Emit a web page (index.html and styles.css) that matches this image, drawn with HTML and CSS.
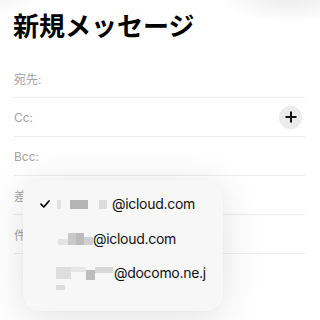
FILE: index.html
```html
<!DOCTYPE html>
<html lang="ja">
<head>
<meta charset="utf-8">
<link rel="stylesheet" href="styles.css">
</head>
<body>
<div class="page">
  <header class="header">
    <h1 class="title">新規メッセージ</h1>
  </header>
  <div class="fields">
    <div class="row"><span class="label">宛先:</span></div>
    <div class="row">
      <span class="label">Cc:</span>
      <span class="add">
        <svg width="12" height="12" viewBox="0 0 12 12"><path d="M6 0.5v11M0.5 6h11" stroke="#111" stroke-width="2" fill="none"/></svg>
      </span>
    </div>
    <div class="row"><span class="label">Bcc:</span></div>
    <div class="row"><span class="label">差</span></div>
    <div class="row"><span class="label">件</span></div>
  </div>

  <div class="menu">
    <div class="item">
      <span class="check">
        <svg width="10" height="8" viewBox="0 0 10 8"><path d="M1 4.2l2.8 2.8L9 1" stroke="#000" stroke-width="1.7" fill="none" stroke-linecap="round" stroke-linejoin="round"/></svg>
      </span>
      <span class="mask m1">
        <i class="b b1a"></i><i class="b b1b"></i><i class="b b1c"></i>
      </span>
      <span class="addr">@icloud.com</span>
    </div>
    <div class="item">
      <span class="check"></span>
      <span class="mask m2">
        <i class="b b2a"></i><i class="b b2b"></i><i class="b b2c"></i><i class="b b2d"></i>
      </span>
      <span class="addr">@icloud.com</span>
    </div>
    <div class="item">
      <span class="check"></span>
      <span class="mask m3">
        <i class="b b3a"></i><i class="b b3b"></i><i class="b b3c"></i><i class="b b3d"></i>
      </span>
      <span class="addr">@docomo.ne.j</span>
    </div>
    <div class="item-tail">
      <span class="check"></span>
      <i class="b b4"></i>
    </div>
  </div>
</div>
</body>
</html>
```

FILE: styles.css
```css
* { box-sizing: border-box; }
html, body {
  margin: 0;
  padding: 0;
  width: 320px;
  height: 320px;
  overflow: hidden;
  background: #fff;
}
body {
  font-family: "Inter", "Noto Sans CJK JP", sans-serif;
  color: #000;
}
.page {
  position: relative;
  width: 320px;
  height: 320px;
  background:
    radial-gradient(ellipse 70px 22px at 290px 0px, rgba(0,0,0,0.07), rgba(0,0,0,0)),
    radial-gradient(ellipse 40px 14px at 0px 0px, rgba(0,0,0,0.04), rgba(0,0,0,0)),
    #fff;
}
.header {
  height: 59px;
  padding: 9px 0 0 13px;
}
.title {
  margin: 0;
  font-family: "Noto Sans CJK JP", sans-serif;
  font-weight: 700;
  font-size: 26px;
  line-height: 32px;
  letter-spacing: 0;
  color: #000;
}
.fields {
  padding: 0 15px 0 14px;
}
.row {
  height: 39px;
  border-bottom: 1px solid #ececec;
  display: flex;
  align-items: center;
  justify-content: space-between;
}
.label {
  font-family: "Inter", "Noto Sans CJK JP", sans-serif;
  font-size: 12px;
  color: #a3a3a3;
}
.add {
  width: 23px;
  height: 23px;
  border-radius: 50%;
  background: #ebebeb;
  display: flex;
  align-items: center;
  justify-content: center;
  margin-right: 3px;
}
.add svg { display: block; }

.menu {
  position: absolute;
  left: 23px;
  top: 180px;
  width: 200px;
  height: 131px;
  border-radius: 16px;
  background: #f7f7f7;
  box-shadow: 0 6px 40px rgba(0,0,0,0.12), 0 0 2px rgba(0,0,0,0.03);
  padding-top: 7px;
}
.item {
  height: 34.5px;
  display: flex;
  align-items: center;
  padding-left: 17px;
}
.item-tail {
  display: flex;
  align-items: center;
  padding-left: 17px;
  margin-top: -6px;
}
.check {
  width: 16px;
  flex: none;
  display: flex;
  align-items: center;
}
.check svg { display: block; }
.mask {
  position: relative;
  height: 14px;
  flex: none;
}
.m1 { width: 56px; }
.m2 { width: 37px; }
.m3 { width: 58px; }
.b {
  position: absolute;
  display: block;
}
.item-tail .b { position: static; }
.b1a { left: 1px; top: 3px; width: 4px; height: 9px; background: #e2e2e2; }
.b1b { left: 14px; top: 3px; width: 18px; height: 9px; background: #b4b4b4; }
.b1c { left: 43px; top: 3px; width: 8px; height: 9px; background: #dcdcdc; }
.b2a { left: 2px; top: 7px; width: 10px; height: 6px; background: #e4e4e4; }
.b2b { left: 12px; top: 1px; width: 8px; height: 12px; background: #c9c9c9; }
.b2c { left: 20px; top: 1px; width: 8px; height: 12px; background: #bcbcbc; }
.b2d { left: 28px; top: 5px; width: 9px; height: 8px; background: #d0d0d0; }
.b3a { left: 0px; top: 1px; width: 15px; height: 12px; background: #dedede; }
.b3b { left: 15px; top: 1px; width: 15px; height: 5px; background: #e6e6e6; }
.b3c { left: 30px; top: 4px; width: 9px; height: 10px; background: #bdbdbd; }
.b3d { left: 39px; top: 1px; width: 18px; height: 6px; background: #d8d8d8; }
.b4 { width: 9px; height: 5px; background: #dcdcdc; margin-left: 0px; }
.addr {
  font-size: 14px;
  line-height: 18px;
  color: #111;
  white-space: nowrap;
  letter-spacing: -0.3px;
}
```
